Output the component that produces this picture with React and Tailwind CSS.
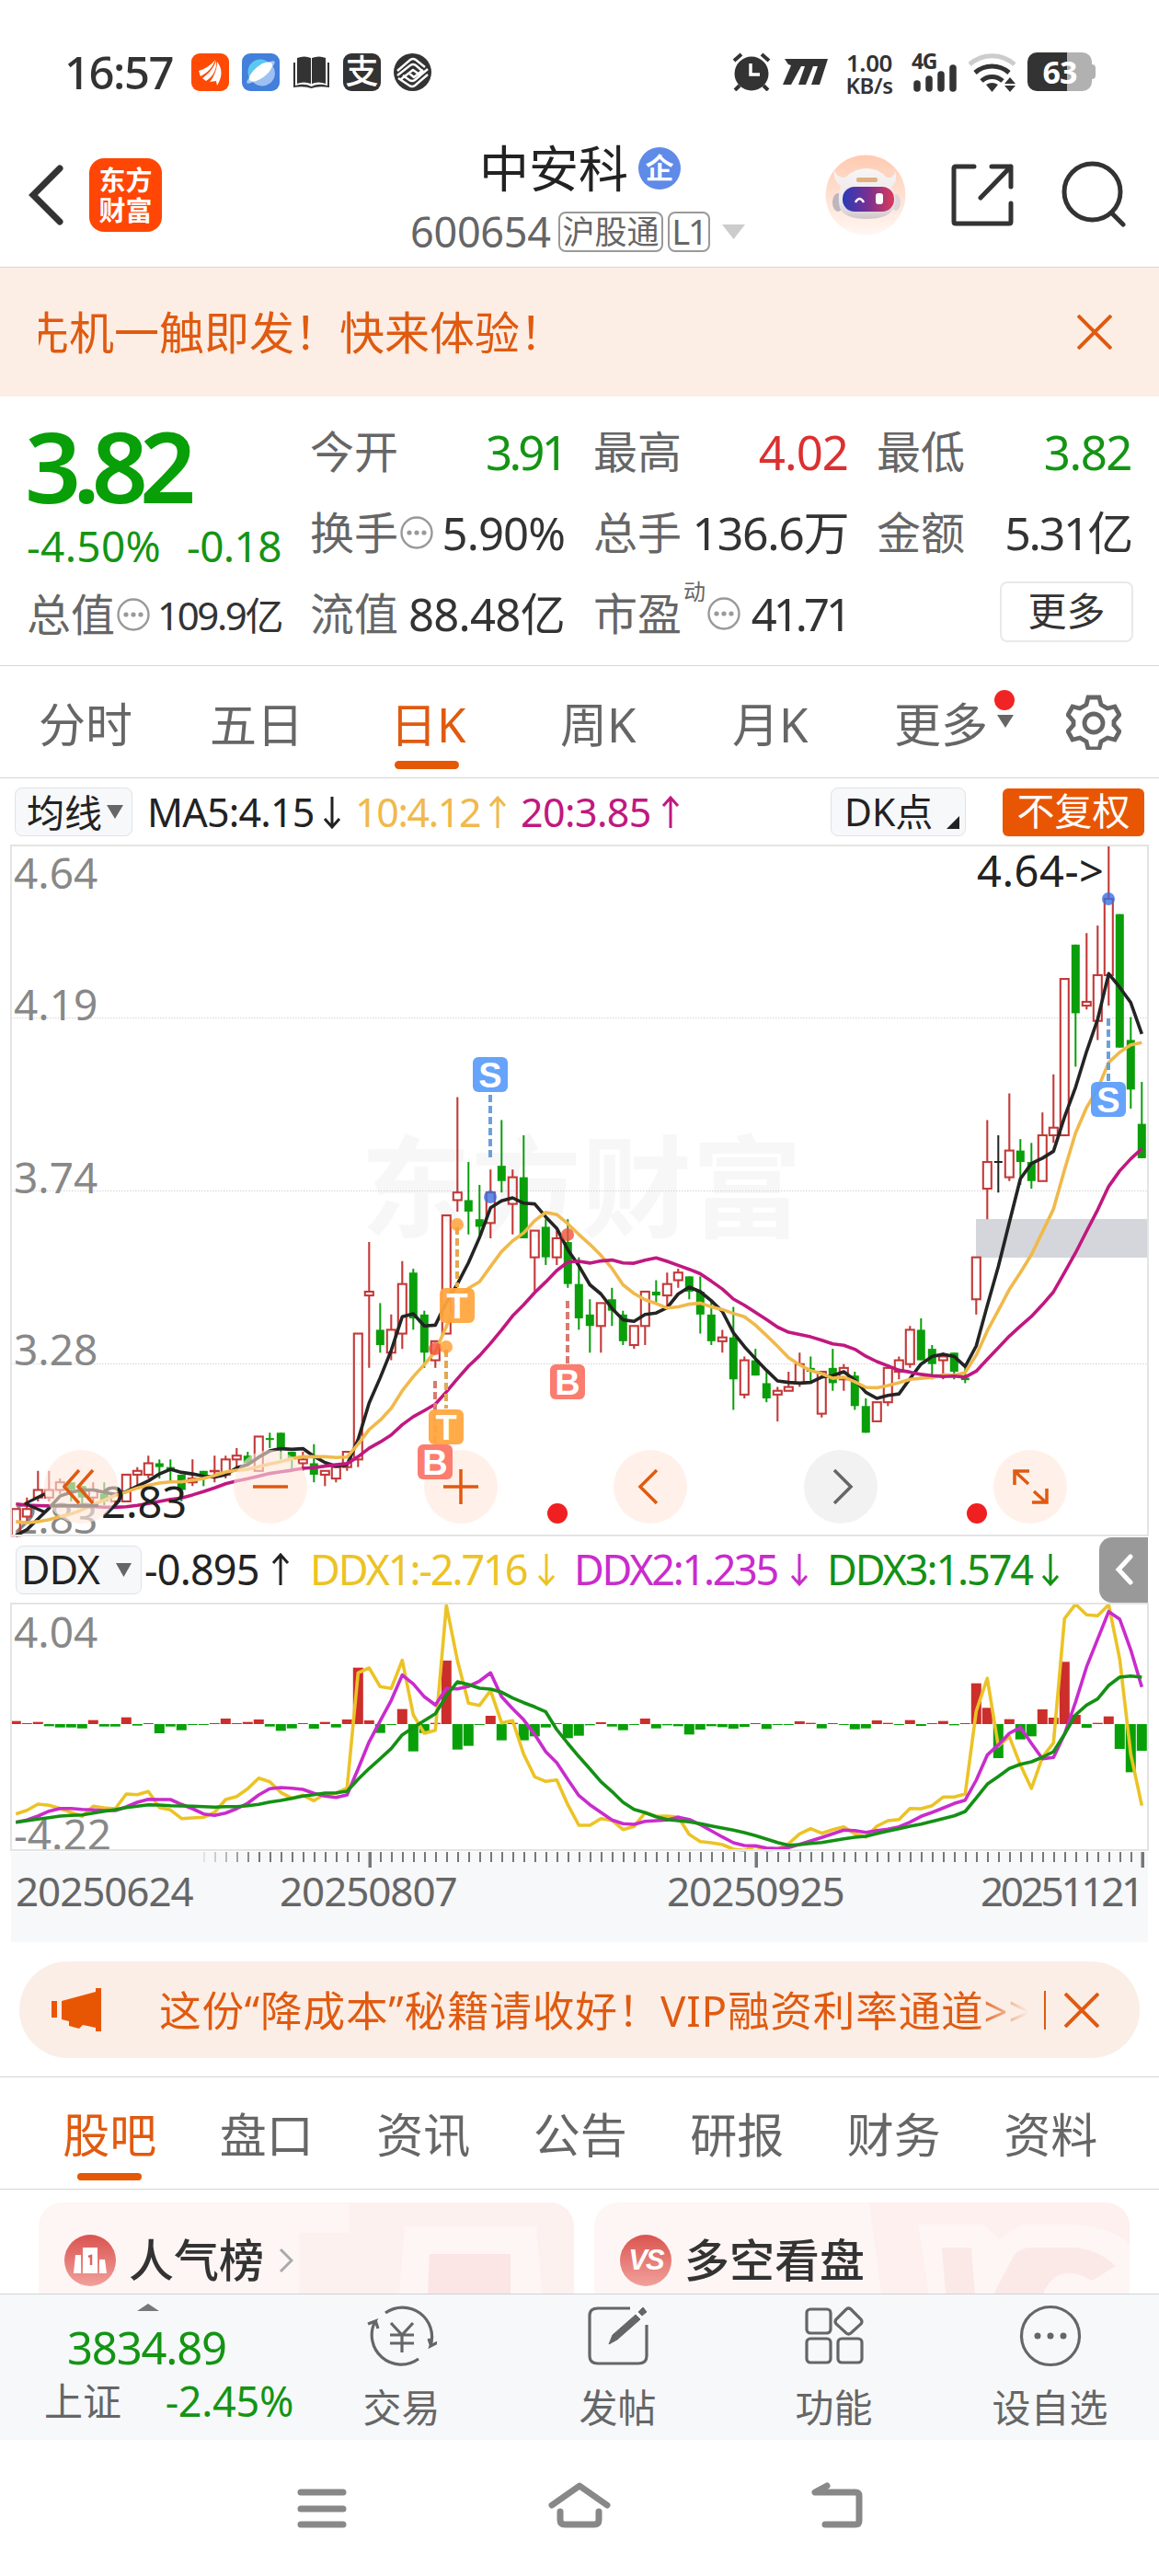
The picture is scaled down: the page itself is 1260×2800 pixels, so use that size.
import React from 'react';

// [open, high, low, close] in cents, one entry per trading day
const candles = [
  [283, 290, 283, 290], [288, 293, 287, 290], [293, 300, 292, 295], [293, 300, 292, 295], [295, 298, 294, 297],
  [297, 297, 292, 295], [296, 296, 291, 293], [293, 297, 292, 295], [294, 297, 291, 292], [292, 294, 291, 294],
  [292, 299, 292, 299], [299, 301, 296, 300], [299, 304, 298, 302], [302, 303, 298, 301], [301, 303, 297, 300],
  [299, 299, 292, 295], [297, 303, 296, 298], [300, 300, 296, 299], [300, 304, 297, 300], [299, 304, 298, 303],
  [303, 306, 301, 304], [304, 305, 302, 302], [300, 309, 300, 309], [308.6, 310, 306, 308.2], [310, 310, 303, 306],
  [305, 305, 300, 303], [302, 305, 300, 303], [302, 307, 297, 299], [299, 300, 296, 300], [298, 301, 297, 301],
  [301, 305, 300, 305], [303, 336, 301, 336], [346, 360, 327, 347], [337, 344, 331, 333], [331, 341, 329, 337],
  [336, 355, 332, 349], [352, 353, 337, 340], [341, 342, 327, 331], [329, 334, 327, 334], [336, 367, 336, 367],
  [371, 398, 368, 373], [371, 381, 362, 368], [366, 375, 362, 364], [365, 379, 361, 373], [380, 392, 373, 376],
  [370, 379, 362, 377], [377, 388, 361, 361], [356, 363, 347, 363], [364, 366, 354, 356], [356, 363, 354, 361],
  [360, 366, 348, 349], [349, 356, 337, 340], [341, 345, 331, 338], [338, 344, 331, 344], [345, 348, 338, 342],
  [341, 342, 333, 334], [333, 338, 332, 338], [338, 347, 333, 347], [347, 350, 344, 346], [346, 352, 343, 349],
  [350, 353, 348, 352], [351, 351, 345, 347], [347, 351, 336, 341], [341, 345, 333, 334], [334, 337, 331, 335],
  [335, 343, 316, 324], [320, 330, 319, 329], [329, 332, 325, 325], [323, 326, 318, 319], [320, 322, 313, 321],
  [321, 326, 321, 322], [323, 331, 322, 328], [327, 330, 323, 326], [315, 326, 314, 326], [327, 332, 321, 323],
  [324, 328, 321, 327], [325, 326, 316, 317], [317, 319, 310, 310], [313, 318, 313, 318], [318, 327, 317, 327],
  [326, 330, 324, 329], [328, 338, 327, 337], [337, 340, 329, 329], [332, 333, 324, 328], [329, 331, 324, 330],
  [331, 331, 324, 326], [324.4, 327, 323, 323.8], [345, 356, 341, 356], [374, 392, 366, 381], [381, 388, 373, 381],
  [377, 399, 376, 384], [384, 387, 375, 381], [381, 386, 374, 376], [376, 394, 376, 388], [388, 404, 386, 390],
  [388, 429, 388, 429], [438, 438, 406, 420], [422, 441, 421, 423], [418, 443, 413, 430], [430, 464, 422, 450],
  [446, 446, 411, 411], [413, 419, 395, 400], [391, 402, 382, 382],
];

// closes before the first visible day, needed by the averages
const earlier = [296, 297, 297, 296, 296, 296, 295, 295, 295, 296, 293, 292, 290, 289, 288, 282, 281, 281, 281];

const bars = [
  10, 3, 7, -7, -11, -11, -14, 13, -8, -8, 22, -5, 3, -30, -8, -20, -3, -3, 3, 18, 3, 7, 15, -8, -22, -14, 3, -15, 7, -11,
  15, 184, 12, -29, -3, 49, -89, -29, 4, 207, -83, -71, -3, 27, -53, 4, -53, -40, -11, 3, -46, -38, -4, 6, -8, -20, -3,
  18, -14, -4, -7, -34, -18, -7, -10, -15, -9, 3, -16, -3, -3, 9, 4, -14, 3, -3, -17, -14, 12, 4, -3, 13, -6, 3, 10, -4,
  3, 133, 53, -111, 16, -50, -40, 48, 21, 203, 30, -12, 4, 25, -81, -157, -87,
];

const ddx1 = [
  935, 923, 903, 907, 917, 930, 943, 910, 915, 918, 870, 872, 862, 914, 922, 950, 948, 946, 930, 888, 878, 853, 818, 830,
  865, 884, 874, 892, 870, 868, 850, 475, 459, 520, 526, 434, 612, 672, 662, 255, 435, 574, 581, 533, 638, 631, 740, 814,
  829, 824, 905, 972, 972, 950, 956, 986, 976, 931, 943, 942, 945, 1002, 1025, 1029, 1035, 1050, 1054, 1040, 1053, 1050,
  1032, 1000, 983, 998, 986, 977, 1000, 1010, 975, 957, 953, 917, 918, 908, 880, 880, 870, 600, 493, 714, 683, 775, 852,
  750, 703, 298, 251, 286, 289, 253, 430, 740, 908,
];

const ddx2 = [
  962, 955, 942, 926, 917, 917, 920, 922, 924, 924, 912, 897, 887, 888, 888, 904, 918, 935, 940, 932, 918, 900, 873, 853,
  849, 851, 855, 868, 877, 881, 873, 788, 700, 632, 565, 482, 511, 553, 580, 526, 527, 519, 502, 475, 553, 592, 628, 676,
  732, 768, 823, 875, 905, 930, 955, 967, 969, 959, 957, 955, 946, 953, 970, 990, 1010, 1029, 1038, 1039, 1046, 1048,
  1045, 1034, 1023, 1012, 1000, 988, 989, 995, 989, 985, 977, 962, 943, 930, 916, 901, 890, 825, 743, 710, 672, 653, 705,
  755, 751, 675, 570, 455, 365, 275, 300, 400, 521,
];

const ddx3 = [
  962, 957, 952, 947, 942, 940, 938, 932, 926, 921, 914, 910, 905, 906, 908, 909, 910, 911, 913, 911, 911, 908, 904, 896,
  891, 884, 877, 872, 867, 866, 861, 822, 787, 755, 722, 677, 653, 631, 608, 550, 504, 513, 525, 528, 538, 557, 572, 586,
  602, 660, 705, 748, 788, 830, 862, 897, 920, 931, 944, 953, 957, 961, 967, 974, 981, 988, 996, 1006, 1017, 1028, 1037,
  1035, 1031, 1028, 1022, 1016, 1011, 1008, 999, 991, 983, 975, 968, 959, 950, 941, 927, 883, 838, 813, 787, 773, 765,
  750, 732, 675, 612, 580, 560, 516, 489, 485, 489,
];

const dayX = (i) => 5.3 + i * 12;
const priceY = (p) => (464 - p) * 4.145;
const ddxY = (v) => (v - 249) / 3;

const toPoints = (values, scale) => values.map((v, i) => `${dayX(i).toFixed(1)},${scale(v).toFixed(1)}`).join(' ');

const average = (days) => {
  const closes = [...earlier, ...candles.map((c) => c[3])];
  return candles.map((_, i) => {
    const end = i + earlier.length + 1;
    return closes.slice(end - days, end).reduce((a, b) => a + b, 0) / days;
  });
};

const badges = [
  { letter: 'S', x: 521, dot: 382, from: 271, to: 340, y: 230, color: '#5c9dfa', line: '#6ba0dc' },
  { letter: 'T', x: 485, dot: 412, from: 415, to: 480, y: 481, color: '#ffa63f', line: '#e3a850' },
  { letter: 'B', x: 461, dot: 547, from: 582, to: 650, y: 651, color: '#fb7566', line: '#d97a70' },
  { letter: 'T', x: 473, dot: 545, from: 548, to: 612, y: 613, color: '#ffa63f', line: '#e3a850' },
  { letter: 'B', x: 605, dot: 423, from: 495, to: 563, y: 564, color: '#fb7566', line: '#d97a70' },
  { letter: 'S', x: 1193, dot: 58, from: 188, to: 256, y: 257, color: '#5c9dfa', line: '#6ba0dc' },
];

const Candle = ({ day, i }) => {
  const [open, high, low, close] = day;
  const x = dayX(i);
  const top = priceY(Math.max(open, close));
  const bottom = priceY(Math.min(open, close));
  if (i === 89) {
    return <path d={`M${x} ${priceY(high)}V${priceY(low)}M${x - 4.5} ${top}h9`} stroke="#222" strokeWidth="2" />;
  }
  if (close < open) {
    return (
      <g fill="#0a9e0a">
        <rect x={x - 1} y={priceY(high)} width="2" height={priceY(low) - priceY(high)} />
        <rect x={x - 4.5} y={top} width="9" height={Math.max(bottom - top, 2)} />
      </g>
    );
  }
  return (
    <g stroke="#c23a38" strokeWidth="2.1" fill="none">
      <path d={`M${x} ${priceY(high)}V${top}M${x} ${bottom}V${priceY(low)}`} />
      <rect x={x - 4.5} y={top} width="9" height={Math.max(bottom - top, 0.5)} />
    </g>
  );
};

const KLine = () => (
  <svg viewBox="0 0 1236 750" className="block h-[750px] w-[1236px] overflow-visible">
    <text x="380" y="417" fontSize="120" fontWeight="700" fill="#f7f7f8" textLength="480">东方财富</text>
    <g stroke="#d4d4d4" strokeWidth="1" strokeDasharray="1.5 1.5">
      <path d="M0 187.5H1236M0 375.5H1236M0 563.5H1236" />
    </g>
    <rect x="1049" y="406" width="186" height="42" fill="#d4d6db" />
    <g fill="#888" fontSize="46">
      <text x="3" y="47">4.64</text>
      <text x="3" y="190">4.19</text>
      <text x="3" y="378">3.74</text>
      <text x="3" y="565">3.28</text>
      <text x="3" y="748">2.83</text>
    </g>
    {candles.map((day, i) => <Candle key={i} day={day} i={i} />)}
    <g fill="none" strokeWidth="3.6" strokeLinejoin="round">
      <polyline points={toPoints(average(5), priceY)} stroke="#242424" />
      <polyline points={toPoints(average(10), priceY)} stroke="#f0b94b" />
      <polyline points={toPoints(average(20), priceY)} stroke="#c01880" />
    </g>
    <text x="1050" y="45" fontSize="47" fill="#222" textLength="138">4.64-&gt;</text>
    <text x="12" y="732" fontSize="47" fill="#222">&lt;</text>
    <path d="M42 717.5H95" stroke="#222" strokeWidth="3.5" />
    <text x="98" y="731" fontSize="47" fill="#222">2.83</text>
    <circle cx="594" cy="726" r="11" fill="#f02020" />
    <circle cx="1050" cy="726" r="11" fill="#f02020" />
  </svg>
);

const TradeBadges = () => (
  <svg viewBox="0 0 1236 750" className="absolute top-0 left-0 h-[750px] w-[1236px]">
    {badges.map((b, i) => (
      <g key={i}>
        <path d={`M${b.x} ${b.from}V${b.to}`} stroke={b.line} strokeWidth="4" strokeDasharray="8 4" />
        <circle cx={b.x} cy={b.dot} r="7" fill={b.letter === 'S' ? '#3b6fe0' : b.letter === 'T' ? '#ff9c2e' : '#f4503c'} fillOpacity=".8" />
        <rect x={b.x - 19} y={b.y} width="38" height="38" rx="6" fill={b.color} fillOpacity=".94" />
        <text x={b.x} y={b.y + 32.5} fontSize="38" fontWeight="700" fill="#fff" textAnchor="middle" fontFamily="Liberation Sans">{b.letter}</text>
      </g>
    ))}
  </svg>
);

const DdxChart = () => (
  <svg viewBox="0 0 1236 268" className="block h-[268px] w-[1236px] overflow-visible">
    <g fill="#888" fontSize="46">
      <text x="3" y="48">4.04</text>
      <text x="3" y="268">-4.22</text>
    </g>
    {bars.map((v, i) => (
      <rect
        key={i}
        x={dayX(i) - 5.5}
        y={v > 0 ? 131 - v / 3 : 131}
        width="11"
        height={Math.abs(v) / 3}
        fill={v > 0 ? '#cc2e2c' : '#08a008'}
      />
    ))}
    <g fill="none" strokeWidth="3.6" strokeLinejoin="round">
      <polyline points={toPoints(ddx1, ddxY)} stroke="#ecc325" />
      <polyline points={toPoints(ddx2, ddxY)} stroke="#c92ccc" />
      <polyline points={toPoints(ddx3, ddxY)} stroke="#149014" />
    </g>
  </svg>
);

const TimeAxis = () => {
  const ticks = Array.from({ length: 86 }, (_, k) => 210 + k * 12);
  return (
    <div className="ml-3 h-[98px] w-[1236px] bg-[#f7f8fa]">
      <svg viewBox="0 0 1236 18" className="block h-[18px] w-[1236px]">
        {ticks.map((x, k) => (
          <rect
            key={x}
            x={(k - 15) % 35 === 0 ? x - 1.5 : x - 1}
            y="0"
            width={(k - 15) % 35 === 0 ? 3.5 : 2}
            height={(k - 15) % 35 === 0 ? 17 : 11}
            fill="#777"
            opacity={Math.min(1, (k + 1) / 6)}
          />
        ))}
      </svg>
      <div className="flex h-[50px] pl-[5px] text-[44px] leading-[48px] text-[#666]">
        <span className="w-[287px] tracking-[-1.1px]">20250624</span>
        <span className="w-[421px] tracking-[-1.1px]">20250807</span>
        <span className="w-[341px] tracking-[-1.1px]">20250925</span>
        <span className="tracking-[-3.3px]">20251121</span>
      </div>
    </div>
  );
};

const Arrow = ({ up = false, className = '' }) => (
  <svg viewBox="0 0 20 36" className={`h-9 w-5 shrink-0 ${up ? '' : 'rotate-180'} ${className}`} fill="none" stroke="currentColor" strokeWidth="3">
    <path d="M10 35V2M2 11L10 2l8 9" />
  </svg>
);

const Info = () => (
  <svg viewBox="0 0 36 36" className="ml-[2px] h-9 w-9 shrink-0">
    <circle cx="18" cy="18" r="16.5" fill="none" stroke="#999" strokeWidth="2.4" />
    <g fill="#999"><circle cx="10" cy="18" r="2.6" /><circle cx="18" cy="18" r="2.6" /><circle cx="26" cy="18" r="2.6" /></g>
  </svg>
);

const Close = () => (
  <svg viewBox="0 0 38 38" className="h-[38px] w-[38px] shrink-0" fill="none" stroke="#e05a10" strokeWidth="4">
    <path d="M1 1l36 36M37 1L1 37" />
  </svg>
);

const StatusBar = () => (
  <div className="flex h-[145px] items-start pt-[57px] pl-[70px] text-[#333]">
    <div className="w-[138px] text-[49px] leading-[42px] font-medium tracking-[-1.5px]">16:57</div>
    <div className="flex gap-[14px] pt-px">
      <svg viewBox="0 0 41 41" className="h-[41px] w-[41px]">
        <rect width="41" height="41" rx="9" fill="#ff4a05" />
        <path d="M8 19C15 17 21 13 26 7 24 14 18 21 10 25zM12 27c7-5 12-11 15-19 1 9-3 17-11 22zM20 31c5-6 8-14 8-22 6 8 6 16 0 26l-1-5z" fill="#fff" />
      </svg>
      <svg viewBox="0 0 41 41" className="h-[41px] w-[41px]">
        <rect width="41" height="41" rx="9" fill="#437fdb" />
        <circle cx="20" cy="20" r="13.5" fill="#5cc8f0" />
        <path d="M7 25l26-12a13.5 13.5 0 0 1-22 17z" fill="#9fc0f2" />
        <ellipse cx="20.5" cy="20.5" rx="19" ry="4.5" transform="rotate(-38 20.5 20.5)" fill="#a9c6f5" />
        <ellipse cx="20.5" cy="20" rx="15" ry="6.5" transform="rotate(-38 20.5 20)" fill="#fff" />
      </svg>
      <svg viewBox="0 0 41 41" className="h-[41px] w-[41px]" fill="#333">
        <path d="M5 5q8-3 15 0v28q-8-3-15 0zM21 5q8-3 15 0v28q-8-3-15 0z" />
        <path d="M1 10h2v25q10-3 17.5 1Q28 32 38 35V10h2v27q-12-2-19.5 1Q13 35 1 37z" />
      </svg>
      <div className="h-[41px] w-[41px] rounded-[9px] bg-[#333] text-center text-[36px] leading-[39px] font-medium text-white">支</div>
      <svg viewBox="0 0 41 41" className="h-[41px] w-[41px]">
        <circle cx="20.5" cy="20.5" r="20.5" fill="#333" />
        <g fill="none" stroke="#fff" strokeWidth="2.4" strokeLinejoin="round">
          <path d="M4 19L18 7q3-2 6 0l10 8M4 24l14-11q3-2 6 0l8 7-4 3-7-5L8 28M37 17L23 29q-3 2-6 0l-7-5M37 23L23 35q-3 2-6 0L5 27M16 21l6 5 10-8" />
        </g>
      </svg>
    </div>
    <svg viewBox="0 0 42 42" className="ml-[327px] h-[42px] w-[42px]">
      <circle cx="21" cy="23" r="18.5" fill="#333" />
      <path d="M2 9l8-7M40 9l-8-7M8 36l-5 5M34 36l5 5" stroke="#333" strokeWidth="4" />
      <path d="M20 12v12h10" stroke="#fff" strokeWidth="3.5" fill="none" />
    </svg>
    <svg viewBox="0 0 50 28" className="mt-[7px] ml-[13px] h-7 w-[50px]" fill="#333">
      <path d="M2 0h47l-9 28h-9l7-20h-5l-8 20h-8l7-20h-4L9 28H0L9 7 6 6z" />
    </svg>
    <div className="mt-[-1px] ml-[18px] w-[52px] text-center text-[26px] leading-[24px] font-semibold tracking-[-0.4px]">1.00<br /><span className="text-[24px]">KB/s</span></div>
    <div className="relative ml-[20px] h-[43px] w-[50px]">
      <span className="absolute -top-px left-0 text-[23px] leading-[20px] font-bold tracking-[-1.5px]">4G</span>
      <svg viewBox="0 0 50 43" className="block h-[43px] w-[50px]" stroke="#333" strokeWidth="7.5" strokeLinecap="round">
        <path d="M6 34v5M19 29v10M32 24v15M45 17v22" />
      </svg>
    </div>
    <svg viewBox="0 0 52 43" className="ml-[12px] h-[43px] w-[52px]" fill="none" strokeWidth="5">
      <path d="M1 13a37 37 0 0 1 49 0" stroke="#ccc" />
      <path d="M7 22a28 28 0 0 1 37 0M14 31a17 17 0 0 1 23 0" stroke="#333" />
      <path d="M19 35q6.5-4 13 0l-6.5 8zM39 34l6-7 6 7zM39 36l6 7 6-7z" fill="#333" />
    </svg>
    <div className="ml-[12px] flex items-center">
      <div className="h-[42px] w-[70px] rounded-[10px] bg-gradient-to-r from-[#333] from-[61%] to-[#b1b1b1] to-[61%] text-center text-[34px] leading-[42px] font-bold tracking-[-1px] text-white">63</div>
      <div className="h-4 w-1 rounded-r bg-[#b1b1b1]" />
    </div>
  </div>
);

const Robot = () => (
  <svg viewBox="0 0 88 88" className="h-[88px] w-[88px]">
    <defs>
      <linearGradient id="halo" x2="0" y2="1"><stop stopColor="#ffcab0" /><stop offset="1" stopColor="#fff7f3" /></linearGradient>
      <linearGradient id="helmet" x2="0" y2="1"><stop stopColor="#f8f5f6" /><stop offset=".7" stopColor="#eae5e9" /><stop offset="1" stopColor="#cfc6ca" /></linearGradient>
      <linearGradient id="visor"><stop stopColor="#283ab8" /><stop offset=".5" stopColor="#7a3090" /><stop offset="1" stopColor="#dc3a58" /></linearGradient>
    </defs>
    <circle cx="44" cy="44" r="43.5" fill="url(#halo)" />
    <ellipse cx="14" cy="52" rx="6" ry="10" fill="#bdb6be" />
    <ellipse cx="77" cy="52" rx="5" ry="9" fill="#ddd5da" />
    <path d="M17 34q-9-6-7-17 3 9 12 8Q32 15 45 15t22 10q9 1 9-7 4 11-4 17 7 11 3 23-6 12-30 12T16 58q-3-12 1-24z" fill="url(#helmet)" />
    <rect x="34" y="25" width="23" height="5" rx="2" fill="#e2b07f" />
    <rect x="19" y="35" width="56" height="27" rx="13" fill="url(#visor)" />
    <path d="M33 52q4.5-8 9 0" fill="none" stroke="#fff" strokeWidth="2.5" />
    <rect x="55" y="42" width="8" height="12" rx="3" fill="#fff" />
  </svg>
);

const Header = () => (
  <header className="flex h-[146px] items-start border-b border-[#d6d6d6]">
    <svg viewBox="0 0 38 66" className="mt-[34px] ml-[31px] h-[66px] w-[38px]" fill="none" stroke="#333" strokeWidth="7" strokeLinecap="round">
      <path d="M34 4L5 33l29 29" />
    </svg>
    <div className="mt-[27px] ml-[28px] h-[80px] w-[79px] rounded-2xl bg-[#ff4605] pt-[7px] text-center text-[29px] leading-[33px] font-bold text-white">东方<br />财富</div>
    <div className="ml-[270px] flex w-[372px] flex-col pt-[6px]">
      <div className="flex items-center pl-[75px]">
        <span className="text-[54px] leading-[64px] text-[#222]">中安科</span>
        <span className="ml-[11px] h-[46px] w-[46px] rounded-full bg-[#5f8ae8] text-center text-[31px] leading-[44px] font-bold text-white">企</span>
      </div>
      <div className="mt-[15px] flex items-center">
        <span className="w-[161px] text-[45px] leading-[44px] tracking-[-0.3px] text-[#666]">600654</span>
        <span className="h-[44px] w-[114px] rounded-lg border-2 border-[#999] text-center text-[35px] leading-[39px] text-[#666]">沪股通</span>
        <span className="ml-[5px] h-[44px] w-[46px] rounded-lg border-2 border-[#999] text-center text-[38px] leading-[39px] tracking-[-2px] text-[#666]">L1</span>
        <svg viewBox="0 0 25 16" className="ml-[13px] h-4 w-[25px]" fill="#ccc"><path d="M0 0h25L12.5 16z" /></svg>
      </div>
    </div>
    <div className="mt-[23px] ml-[79px]"><Robot /></div>
    <svg viewBox="0 0 68 68" className="mt-[33px] ml-[49px] h-[68px] w-[68px]" fill="none" stroke="#333" strokeWidth="5" strokeLinecap="round" strokeLinejoin="round">
      <path d="M25 3H5q-2 0-2 2v58q0 2 2 2h58q2 0 2-2V43M44 3h21v22M65 3L32 37" />
    </svg>
    <svg viewBox="0 0 72 72" className="mt-[30px] ml-[51px] h-[72px] w-[72px]" fill="none" stroke="#333" strokeWidth="5" strokeLinecap="round">
      <circle cx="34.5" cy="33.5" r="30.5" />
      <path d="M56 57l12 12" />
    </svg>
  </header>
);

const Quote = () => (
  <section className="grid h-[293px] grid-cols-[277px_277px_277px_277px] gap-x-[31px] border-b border-[#d6d6d6] pt-[16px] pl-[29px] text-[48px] text-[#666]">
    <div>
      <div className="-ml-[2px] h-[118px] text-[107px] leading-[118px] font-semibold tracking-[-9px] text-[#089f08]">3.82</div>
      <div className="flex h-[56px] items-center justify-between text-[46px] text-[#149414]"><span className="tracking-[0.3px]">-4.50%</span><span className="tracking-[-0.6px]">-0.18</span></div>
      <div className="flex h-[94px] items-center justify-between">
        <span className="flex items-center">总值<Info /></span>
        <span className="text-[42px] tracking-[-2.4px] text-[#333]">109.9亿</span>
      </div>
    </div>
    <div className="leading-[88px]">
      <div className="flex h-[88px] justify-between"><span>今开</span><span className="text-[51px] tracking-[-3.8px] text-[#149414]">3.91</span></div>
      <div className="flex h-[88px] items-center justify-between"><span className="flex items-center">换手<Info /></span><span className="text-[49px] tracking-[-0.9px] text-[#333]">5.90%</span></div>
      <div className="flex h-[88px] items-center justify-between"><span>流值</span><span className="text-[49px] tracking-[-0.7px] text-[#333]">88.48亿</span></div>
    </div>
    <div className="leading-[88px]">
      <div className="flex h-[88px] justify-between"><span>最高</span><span className="text-[51px] tracking-[-1px] text-[#dc3030]">4.02</span></div>
      <div className="flex h-[88px] items-center justify-between"><span>总手</span><span className="text-[50px] tracking-[-1.4px] text-[#333]">136.6万</span></div>
      <div className="flex h-[88px] items-center">
        <span>市盈</span><span className="-mt-12 ml-[2px] text-[24px]">动</span><Info /><span className="ml-auto text-[49px] tracking-[-4px] text-[#333]">41.71</span>
      </div>
    </div>
    <div className="leading-[88px]">
      <div className="flex h-[88px] justify-between"><span>最低</span><span className="text-[51px] tracking-[-1.5px] text-[#149414]">3.82</span></div>
      <div className="flex h-[88px] items-center justify-between"><span>金额</span><span className="text-[50px] tracking-[-2.3px] text-[#333]">5.31亿</span></div>
      <div className="mt-[9px] -mr-[2px] ml-auto h-[66px] w-[145px] rounded-lg border-2 border-[#e8e9ec] text-center text-[42px] leading-[60px] text-[#333]">更多</div>
    </div>
  </section>
);

const PeriodTabs = () => (
  <nav className="flex h-[122px] border-b border-[#d6d6d6] pl-[42px] text-[51px] leading-[126px] text-[#666]">
    <span className="w-[186px]">分时</span>
    <span className="w-[196px]">五日</span>
    <span className="relative w-[185px] text-[#e05a10]">日K<i className="absolute top-[103px] left-[5px] h-[9px] w-[70px] rounded-full bg-[#e45806]" /></span>
    <span className="w-[187px]">周K</span>
    <span className="w-[176px]">月K</span>
    <span className="relative w-[187px]">
      更多
      <i className="absolute top-[26px] left-[109px] h-[22px] w-[22px] rounded-full bg-[#f02424]" />
      <svg viewBox="0 0 18 14" className="absolute top-[53px] left-[112px] h-[14px] w-[18px]" fill="#666"><path d="M0 0h18L9 14z" /></svg>
    </span>
    <svg viewBox="0 0 60 60" className="mt-[31px] h-[60px] w-[60px]" fill="none" stroke="#666" strokeWidth="4.8">
      <path d="M24 3h12l2 8 7 4 8-2 5 9-6 7v4l6 7-5 9-8-2-7 4-2 8H24l-2-8-7-4-8 2-5-9 6-7v-4l-6-7 5-9 8 2 7-4z" />
      <circle cx="30" cy="31" r="10" />
    </svg>
  </nav>
);

const MaRow = () => (
  <div className="flex h-[73px] items-center pl-4 text-[43px] leading-[50px] text-[#222]">
    <div className="flex h-[53px] w-[128px] items-center rounded-lg border border-[#e0e2e6] bg-[#f7f8fa] pl-[12px] text-[41px]">
      均线<svg viewBox="0 0 18 15" className="ml-[5px] h-[15px] w-[18px]" fill="#666"><path d="M0 0h18L9 15z" /></svg>
    </div>
    <span className="ml-[16px] w-[191px] tracking-[-0.8px]">MA5:4.15</span>
    <Arrow className="mr-[15px]" />
    <span className="w-[145px] tracking-[-1.4px] text-[#f0b94b]">10:4.12</span>
    <Arrow up className="mr-[15px] text-[#f0b94b]" />
    <span className="w-[153px] tracking-[-0.6px] text-[#c01880]">20:3.85</span>
    <Arrow up className="text-[#c01880]" />
    <div className="ml-[164px] flex h-[53px] w-[147px] items-end rounded-lg border border-[#e0e2e6] bg-[#f7f8fa] pb-px pl-[14px] text-[41px]">
      DK点<svg viewBox="0 0 14 14" className="mb-1.5 ml-auto mr-[6px] h-[14px] w-[14px]" fill="#222"><path d="M14 0v14H0z" /></svg>
    </div>
    <div className="ml-[40px] h-[52px] w-[154px] rounded-md bg-[#e85604] text-center text-[41px] leading-[49px] text-white">不复权</div>
  </div>
);

const RoundButton = ({ gray = false, children }) => (
  <div className={`flex h-20 w-20 items-center justify-center rounded-full ${gray ? 'bg-[#f2f2f2]' : 'bg-[#ffe7da]/60'}`}>
    <svg viewBox="0 0 40 40" className="h-10 w-10" fill="none" stroke={gray ? '#666' : '#e05a10'} strokeWidth="3.5">
      {children}
    </svg>
  </div>
);

const DdxRow = () => (
  <div className="flex h-[74px] items-center pl-[17px] text-[45px] leading-[50px] text-[#222]">
    <div className="flex h-[53px] w-[137px] items-center rounded-lg border border-[#e0e2e6] bg-[#f7f8fa] pl-[5px] text-[43px] tracking-[-0.6px]">
      DDX<svg viewBox="0 0 17 15" className="ml-auto mr-[10px] h-[15px] w-[17px]" fill="#666"><path d="M0 0h17L8.5 15z" /></svg>
    </div>
    <span className="ml-[3px] w-[138px] tracking-[-0.8px]">-0.895</span>
    <Arrow up />
    <span className="ml-[22px] w-[247px] tracking-[-2.1px] text-[#ecc325]">DDX1:-2.716</span>
    <Arrow className="text-[#ecc325]" />
    <span className="ml-[20px] w-[235px] tracking-[-2.3px] text-[#c92ccc]">DDX2:1.235</span>
    <Arrow className="text-[#c92ccc]" />
    <span className="ml-[20px] w-[233px] tracking-[-2.1px] text-[#149014]">DDX3:1.574</span>
    <Arrow className="text-[#149014]" />
    <div className="ml-auto mr-3 flex h-[71px] w-[53px] items-center justify-center rounded-l-[14px] bg-[#999]">
      <svg viewBox="0 0 20 34" className="h-[34px] w-5" fill="none" stroke="#fff" strokeWidth="5" strokeLinecap="round"><path d="M17 3L4 17l13 14" /></svg>
    </div>
  </div>
);

const Charts = () => (
  <section>
    <MaRow />
    <div className="relative ml-3 w-[1236px] outline-2 -outline-offset-1 outline-[#e4e4e4]">
      <KLine />
      <div className="absolute top-[657px] left-[36px] flex w-[1112px] justify-between">
        <RoundButton><path d="M18 2L2 20l16 18M33 2L17 20l16 18" /></RoundButton>
        <RoundButton><path d="M1 20h38" /></RoundButton>
        <RoundButton><path d="M1 20h38M20 1v38" /></RoundButton>
        <RoundButton><path d="M27 2L9 20l18 18" /></RoundButton>
        <RoundButton gray><path d="M13 2l18 18-18 18" /></RoundButton>
        <RoundButton><path d="M3 18V3h16M3 3l15 14M38 22v15H22M37 37L24 25" /></RoundButton>
      </div>
      <TradeBadges />
    </div>
    <DdxRow />
    <div className="ml-3 w-[1236px] outline-2 -outline-offset-1 outline-[#e4e4e4]"><DdxChart /></div>
    <div className="h-[2px]" />
    <TimeAxis />
  </section>
);

const Promo = () => (
  <div className="mt-[21px] ml-[21px] flex h-[105px] w-[1218px] items-center rounded-full bg-[#fbeee6] text-[#e05a10]">
    <svg viewBox="0 0 54 47" className="ml-[35px] h-[47px] w-[54px]" fill="#e85604">
      <path d="M0 14h6v18H0zM11 14L48 4V0h6v47h-6v-4l-14-3-4 4-11-3v-5l-8-2z" />
    </svg>
    <div className="ml-[63px] w-[945px] overflow-hidden bg-gradient-to-r from-[#e05a10] from-94% to-transparent bg-clip-text text-[45.7px] leading-[60px] tracking-[0.75px] whitespace-nowrap text-transparent">
      这份“降成本”秘籍请收好！VIP融资利率通道&gt;&gt;
    </div>
    <div className="ml-[17px] mr-[20px] h-[42px] w-[2px] bg-[#e05a10]" />
    <Close />
  </div>
);

const sections = ['股吧', '盘口', '资讯', '公告', '研报', '财务', '资料'];

const SectionTabs = () => (
  <nav className="mt-[20px] flex h-[123px] border-y border-[#d6d6d6] pl-[34px] text-[51px] leading-[124px] text-[#666]">
    {sections.map((name, i) => (
      <span key={name} className={`relative w-[170.5px] text-center ${i === 0 ? 'text-[#e05a10]' : ''}`}>
        {name}
        {i === 0 && <i className="absolute top-[104px] left-[50px] h-[8px] w-[70px] rounded-full bg-[#e45806]" />}
      </span>
    ))}
  </nav>
);

const Cards = () => (
  <div className="flex h-[113px] gap-[22px] overflow-hidden pt-[14px] pl-[42px] text-[49px] leading-[124px] font-medium text-[#333]">
    <div className="relative flex h-[180px] w-[582px] items-start overflow-hidden rounded-[26px] bg-[#fef6f4] pl-[28px]">
      <svg viewBox="0 0 582 100" className="absolute top-0 left-0 h-[100px] w-[582px]">
        <path d="M283 100V33h54V0h245v100z" fill="#fdf1ef" />
        <path d="M392 100l6-74h143l6 74z" fill="#fef6f4" />
        <path d="M425 56h88v44h-90z" fill="#fbe6e5" />
      </svg>
      <svg viewBox="0 0 56 56" className="relative mt-[35px] h-14 w-14">
        <defs><linearGradient id="disc" x2="0" y2="1"><stop stopColor="#d9534f" /><stop offset="1" stopColor="#f2a09c" /></linearGradient></defs>
        <circle cx="28" cy="28" r="28" fill="url(#disc)" />
        <path d="M10 42l2-20h6v20zM20 42V14h16v28zM38 42V27h6l2 15z" fill="#fff" />
        <path d="M26 24l3-1v10" fill="none" stroke="#dd6560" strokeWidth="2.5" />
      </svg>
      <span className="relative ml-[14px]">人气榜</span>
      <svg viewBox="0 0 16 28" className="relative mt-[49px] ml-[16px] h-7 w-4" fill="none" stroke="#aaa" strokeWidth="3"><path d="M2 2l12 12L2 26" /></svg>
    </div>
    <div className="relative flex h-[180px] w-[582px] items-start overflow-hidden rounded-[26px] bg-[#fef6f4] pl-[28px]">
      <svg viewBox="0 0 582 100" className="absolute top-0 left-0 h-[100px] w-[582px]">
        <path d="M299 0h283v100H312z" fill="#fdf0ee" />
        <path d="M352 24h72l16 16 24-16h60q42 4 58 22v54H364z" fill="#fef6f4" />
        <path d="M378 49h32l4 51h-32zM434 100l22-42q6-9 20-9h46q26 2 45 20l-26 16q-38-22-53 15z" fill="#fbe9e8" />
      </svg>
      <div className="relative mt-[35px] h-14 w-14 rounded-full bg-gradient-to-b from-[#d9534f] to-[#f2a09c] text-center font-['Liberation_Sans'] text-[31px] leading-[56px] font-bold tracking-[-2px] text-white italic">VS</div>
      <span className="relative ml-[14px]">多空看盘</span>
    </div>
  </div>
);

const Action = ({ label, children }) => (
  <div className="flex w-[235px] flex-col items-center">
    <svg viewBox="0 0 76 68" className="mt-[11px] h-[68px] w-[76px]" fill="none" stroke="#666" strokeWidth="3.2">{children}</svg>
    <span className="mt-[16px] text-[42px] leading-[56px]">{label}</span>
  </div>
);

const BottomBar = () => (
  <div className="flex h-[159px] border-t border-[#d0d3d6] bg-[#f6f8fa] text-[#666]">
    <div className="w-[319px]">
      <svg viewBox="0 0 24 8" className="mt-[10px] ml-[149px] block h-2 w-6" fill="#777"><path d="M12 0l12 8H0z" /></svg>
      <div className="mt-[9px] pl-[73px] text-[49px] leading-[60px] tracking-[-1.2px] text-[#149414]">3834.89</div>
      <div className="flex items-center pl-[48px] text-[42px] leading-[58px]">
        <span className="w-[132px]">上证</span>
        <span className="text-[45px] tracking-[-0.3px] text-[#149414]">-2.45%</span>
      </div>
    </div>
    <Action label="交易">
      <path d="M20 9a32 32 0 0 1 49 36l8-4M70 46l-3-9M56 59A32 32 0 0 1 9 18l-8 3M9 17l3 9" />
      <path d="M26 20l12 13 12-13M38 33v19M25 33h26M25 42h26" />
    </Action>
    <Action label="发帖">
      <path d="M51 4H16Q7 4 7 12v44q0 8 9 8h44q9 0 9-8V22" />
      <path d="M28 43l4-10 25-22 5 5-25 22zM60 8l5-5 4 5-5 4z" fill="#666" strokeWidth="1" />
    </Action>
    <Action label="功能">
      <rect x="8" y="5" width="26" height="26" rx="4" />
      <path d="M51 5q2.5-2 5 0l11 11q2 2.5 0 5L56 31q-2.5 2-5 0L40 21q-2-2.5 0-5z" />
      <rect x="8" y="37" width="26" height="26" rx="4" />
      <rect x="42" y="37" width="26" height="26" rx="4" />
    </Action>
    <Action label="设自选">
      <circle cx="38" cy="34" r="31.5" />
      <g fill="#666" stroke="none"><circle cx="24" cy="34" r="3.5" /><circle cx="38" cy="34" r="3.5" /><circle cx="52" cy="34" r="3.5" /></g>
    </Action>
  </div>
);

const SystemNav = () => (
  <div className="flex h-[146px] items-start pt-[45px] pl-[322px]">
    <svg viewBox="0 0 56 54" className="h-[54px] w-14" stroke="#888" strokeWidth="7" strokeLinecap="round"><path d="M5 12h46M5 30h46M5 47h46" /></svg>
    <svg viewBox="0 0 70 54" className="ml-[217px] h-[54px] w-[70px]" fill="none" stroke="#888" strokeWidth="7" strokeLinecap="round" strokeLinejoin="round">
      <path d="M5 26L35 5l30 21M14 33v9q0 5 5 5h32q5 0 5-5v-9" />
    </svg>
    <svg viewBox="0 0 58 54" className="ml-[216px] h-[54px] w-[58px]" fill="none" stroke="#888" strokeWidth="7" strokeLinecap="round" strokeLinejoin="round">
      <path d="M18 5L5 12h44q4 0 4 4v27q0 4-4 4H16" />
    </svg>
  </div>
);

const App = () => (
  <div className="h-[2800px] w-[1260px] overflow-hidden bg-white font-['Noto_Sans','Noto_Sans_CJK_SC',sans-serif] whitespace-nowrap">
    <StatusBar />
    <Header />
    <div className="flex h-[140px] items-center bg-[#fceee5] pl-[42px] text-[#e05a10]">
      <div className="w-[1129px] overflow-hidden text-[49px] leading-[72px]"><span className="-ml-4">先机一触即发！快来体验！</span></div>
      <Close />
    </div>
    <Quote />
    <PeriodTabs />
    <Charts />
    <Promo />
    <SectionTabs />
    <Cards />
    <BottomBar />
    <SystemNav />
  </div>
);

export default App;
